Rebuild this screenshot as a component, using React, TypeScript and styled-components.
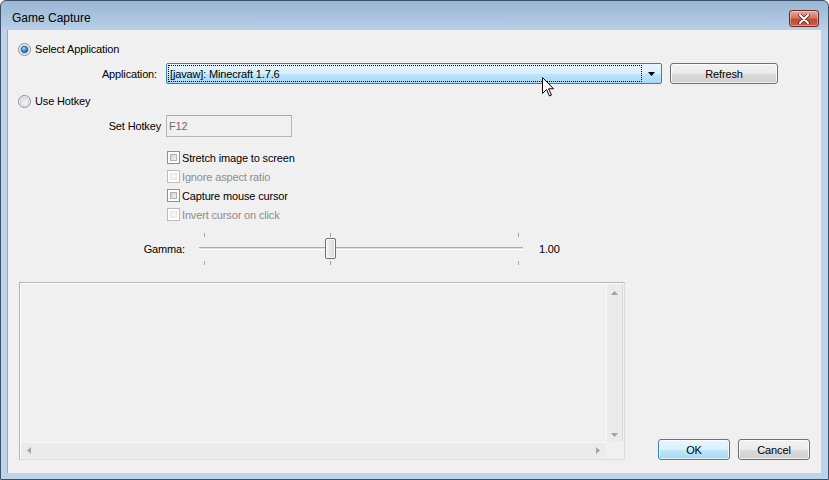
import styled, { createGlobalStyle } from 'styled-components';

const GlobalStyle = createGlobalStyle`
  html, body {
    margin: 0;
    padding: 0;
    background: #ffffff;
  }
  body {
    font-family: 'Liberation Sans', Arial, sans-serif;
    font-size: 11px;
    letter-spacing: -0.15px;
    color: #000000;
  }
`;

const Window = styled.div`
  position: relative;
  box-sizing: border-box;
  width: 829px;
  height: 480px;
  display: flex;
  flex-direction: column;
  border: 1px solid #3e5068;
  border-radius: 6px 6px 0 0;
  background: linear-gradient(#9bb6d3 0px, #b3cbe5 24px, #bcd3ea 30px, #bcd3ea 100%);
  overflow: hidden;
`;

const TitleBar = styled.div`
  height: 29px;
  flex: none;
  display: flex;
  align-items: flex-start;
  justify-content: space-between;
  box-sizing: border-box;
  padding: 9px 9px 0 11px;
`;

const Title = styled.span`
  font-size: 12px;
  line-height: 17px;
  letter-spacing: 0;
  color: #000000;
`;

const CloseButton = styled.div`
  box-sizing: border-box;
  width: 30px;
  height: 17px;
  display: flex;
  align-items: center;
  justify-content: center;
  border: 1px solid #6c2a22;
  border-radius: 3px;
  background: linear-gradient(#e6a89c 0%, #d37965 45%, #c04a35 55%, #c9604a 100%);
  box-shadow: inset 0 0 0 1px rgba(255, 255, 255, 0.35);
`;

const Client = styled.div`
  flex: 1;
  margin: 0 7px 6px 7px;
  background: #f0f0f0;
  display: flex;
  flex-direction: column;
  padding-top: 11px;
  box-shadow: -1px 0 0 #8fa8c6;
`;

const RadioRow = styled.label<{ $top: number }>`
  height: 16px;
  display: flex;
  align-items: center;
  gap: 4px;
  padding-left: 10px;
  margin-top: ${(p) => p.$top}px;
`;

const FieldRow = styled.div<{ $top: number }>`
  display: grid;
  grid-template-columns: 153px auto auto;
  justify-content: start;
  align-items: center;
  column-gap: 5px;
  margin-top: ${(p) => p.$top}px;
`;

const FieldLabel = styled.span<{ $pad?: number }>`
  text-align: right;
  padding-right: ${(p) => p.$pad ?? 0}px;
`;

const ComboBox = styled.div`
  box-sizing: border-box;
  width: 496px;
  height: 21px;
  display: flex;
  align-items: center;
  padding: 1px;
  border: 1px solid #3c7fb1;
  border-radius: 2px;
  background: linear-gradient(#eaf6fd 0%, #d9f0fc 50%, #bee6fd 51%, #a7d9f5 100%);
`;

const ComboText = styled.div`
  box-sizing: border-box;
  flex: 1;
  height: 17px;
  display: flex;
  align-items: center;
  padding-left: 1px;
  border: 1px dotted #000000;
`;

const ComboArrow = styled.div`
  width: 18px;
  display: flex;
  justify-content: center;
  align-items: center;
`;

const Button = styled.div<{ $default?: boolean; $width: number }>`
  box-sizing: border-box;
  width: ${(p) => p.$width}px;
  height: 21px;
  display: flex;
  align-items: center;
  justify-content: center;
  border: 1px solid ${(p) => (p.$default ? '#3c7fb1' : '#707070')};
  border-radius: 3px;
  background: ${(p) =>
    p.$default
      ? 'linear-gradient(#eaf6fd 0%, #d9f0fc 50%, #bee6fd 51%, #a7d9f5 100%)'
      : 'linear-gradient(#f2f2f2 0%, #ebebeb 50%, #dddddd 51%, #cfcfcf 100%)'};
  box-shadow: inset 0 0 0 1px rgba(255, 255, 255, 0.7);
`;

const RefreshButton = styled(Button)`
  margin-left: 3px;
`;

const HotkeyInput = styled.div`
  box-sizing: border-box;
  width: 126px;
  height: 22px;
  display: flex;
  align-items: center;
  padding-left: 2px;
  color: #6d6d6d;
  border: 1px solid #b6b6b6;
  border-top-color: #a8a8a8;
  background: #f0f0f0;
`;

const CheckList = styled.div`
  display: flex;
  flex-direction: column;
  padding-left: 159px;
  margin-top: 11px;
`;

const CheckRow = styled.div<{ $disabled?: boolean }>`
  height: 19px;
  display: flex;
  align-items: center;
  gap: 2px;
  color: ${(p) => (p.$disabled ? '#8d8d8d' : '#000000')};
`;

const Box = styled.span<{ $disabled?: boolean }>`
  box-sizing: border-box;
  width: 13px;
  height: 13px;
  border: 1px solid ${(p) => (p.$disabled ? '#bcbcbc' : '#8e8f8f')};
  background: #ffffff;
  padding: 2px;
  &::after {
    content: '';
    display: block;
    width: 100%;
    height: 100%;
    box-sizing: border-box;
    border: 1px solid ${(p) => (p.$disabled ? '#e6e6e6' : '#aeb3b9')};
    background: ${(p) =>
      p.$disabled ? '#f4f4f4' : 'linear-gradient(135deg, #cbcfd5 0%, #f6f6f6 100%)'};
  }
`;

const SliderRow = styled.div`
  display: grid;
  grid-template-columns: 177px 324px auto;
  column-gap: 14px;
  align-items: center;
  height: 35px;
  margin-top: 7px;
`;

const GammaLabel = styled.span`
  text-align: right;
`;

const Slider = styled.div`
  position: relative;
  height: 35px;
`;

const Track = styled.div`
  position: absolute;
  left: 0;
  right: 0;
  top: 16px;
  height: 1px;
  border-top: 1px solid #a9a9a9;
  border-bottom: 1px solid #ffffff;
  background: #dedede;
`;

const Tick = styled.span<{ $bottom?: boolean }>`
  position: absolute;
  width: 1px;
  height: 4px;
  background: #a5a5a5;
  top: ${(p) => (p.$bottom ? 30 : 2)}px;
`;

const Thumb = styled.div`
  position: absolute;
  top: 7px;
  box-sizing: border-box;
  width: 11px;
  height: 21px;
  border: 1px solid #707070;
  border-radius: 2px;
  background: linear-gradient(90deg, #f4f4f4 0%, #e4e4e4 60%, #d6d6d6 100%);
  box-shadow: inset 0 0 0 1px #fbfbfb;
`;

const ValueText = styled.span`
  padding-left: 2px;
`;

const BottomArea = styled.div`
  display: flex;
  align-items: flex-end;
  padding: 0 11px 0 11px;
  margin-top: 16px;
`;

const LogPanel = styled.div`
  box-sizing: border-box;
  width: 606px;
  height: 178px;
  display: grid;
  grid-template-columns: 1fr 17px;
  grid-template-rows: 1fr 16px;
  padding: 1px;
  border: 1px solid #b4b4b4;
  border-right-color: #dcdcdc;
  border-bottom-color: #dcdcdc;
  box-shadow: inset 1px 1px 0 #ffffff;
  background: #f0f0f0;
`;

const VScroll = styled.div`
  display: flex;
  flex-direction: column;
  justify-content: space-between;
  align-items: center;
  padding: 7px 0 5px;
  background: #ebebeb;
  border-left: 1px solid #f7f7f7;
  border-right: 1px solid #dadada;
`;

const HScroll = styled.div`
  display: flex;
  justify-content: space-between;
  align-items: center;
  padding: 0 6px 0 6px;
  background: #ebebeb;
  border-top: 1px solid #f7f7f7;
`;

const Corner = styled.div`
  background: #f0f0f0;
`;

const ButtonGroup = styled.div`
  margin-left: auto;
  display: flex;
  gap: 8px;
`;

const Cursor = styled.svg`
  position: absolute;
  left: 541px;
  top: 76px;
`;

const RadioIcon = ({ checked }: { checked?: boolean }) => (
  <svg width="13" height="13" viewBox="0 0 13 13">
    <defs>
      <linearGradient id="rbg" x1="0" y1="0" x2="1" y2="1">
        <stop offset="0" stopColor="#d8dadd" />
        <stop offset="1" stopColor="#ffffff" />
      </linearGradient>
      <radialGradient id="rdot" cx="0.4" cy="0.35" r="0.7">
        <stop offset="0" stopColor="#a7dbfb" />
        <stop offset="0.5" stopColor="#3a8fd3" />
        <stop offset="1" stopColor="#1a4f86" />
      </radialGradient>
    </defs>
    <circle cx="6.5" cy="6.5" r="6" fill="#f4f4f4" stroke="#8a8c8e" />
    <circle cx="6.5" cy="6.5" r="4.2" fill="url(#rbg)" stroke="#c2c5c9" strokeWidth="0.8" />
    {checked && <circle cx="6.5" cy="6.5" r="3.3" fill="url(#rdot)" stroke="#1b4f80" strokeWidth="0.6" />}
  </svg>
);

const Arrow = ({ dir }: { dir: 'up' | 'down' | 'left' | 'right' }) => {
  const pts = {
    up: '0,4 3.5,0 7,4',
    down: '0,0 7,0 3.5,4',
    left: '4,0 4,7 0,3.5',
    right: '0,0 4,3.5 0,7',
  }[dir];
  const vertical = dir === 'up' || dir === 'down';
  return (
    <svg width={vertical ? 7 : 4} height={vertical ? 4 : 7} viewBox={vertical ? '0 0 7 4' : '0 0 4 7'}>
      <polygon points={pts} fill="#a3a3a3" />
    </svg>
  );
};

const ticks = [5, 131, 319];

export default function App() {
  return (
    <>
      <GlobalStyle />
      <Window>
        <TitleBar>
          <Title>Game Capture</Title>
          <CloseButton>
            <svg width="12" height="10" viewBox="0 0 12 10">
              <path d="M2 1 L10 9 M10 1 L2 9" stroke="#4a1a14" strokeWidth="3.4" strokeLinecap="round" />
              <path d="M2 1 L10 9 M10 1 L2 9" stroke="#ffffff" strokeWidth="2" strokeLinecap="round" />
            </svg>
          </CloseButton>
        </TitleBar>
        <Client>
          <RadioRow $top={0}>
            <RadioIcon checked />
            <span>Select Application</span>
          </RadioRow>
          <FieldRow $top={6}>
            <FieldLabel $pad={4}>Application:</FieldLabel>
            <ComboBox>
              <ComboText>[javaw]: Minecraft 1.7.6</ComboText>
              <ComboArrow>
                <svg width="7" height="4" viewBox="0 0 7 4">
                  <polygon points="0,0 7,0 3.5,4" fill="#000000" />
                </svg>
              </ComboArrow>
            </ComboBox>
            <RefreshButton $width={108}>Refresh</RefreshButton>
          </FieldRow>
          <RadioRow $top={9}>
            <RadioIcon />
            <span>Use Hotkey</span>
          </RadioRow>
          <FieldRow $top={6}>
            <FieldLabel>Set Hotkey</FieldLabel>
            <HotkeyInput>F12</HotkeyInput>
          </FieldRow>
          <CheckList>
            <CheckRow>
              <Box />
              <span>Stretch image to screen</span>
            </CheckRow>
            <CheckRow $disabled>
              <Box $disabled />
              <span>Ignore aspect ratio</span>
            </CheckRow>
            <CheckRow>
              <Box />
              <span>Capture mouse cursor</span>
            </CheckRow>
            <CheckRow $disabled>
              <Box $disabled />
              <span>Invert cursor on click</span>
            </CheckRow>
          </CheckList>
          <SliderRow>
            <GammaLabel>Gamma:</GammaLabel>
            <Slider>
              <Track />
              {ticks.map((t) => (
                <Tick key={`t${t}`} style={{ left: t }} />
              ))}
              {ticks.map((t) => (
                <Tick key={`b${t}`} $bottom style={{ left: t }} />
              ))}
              <Thumb style={{ left: 126 }} />
            </Slider>
            <ValueText>1.00</ValueText>
          </SliderRow>
          <BottomArea>
            <LogPanel>
              <div />
              <VScroll>
                <Arrow dir="up" />
                <Arrow dir="down" />
              </VScroll>
              <HScroll>
                <Arrow dir="left" />
                <Arrow dir="right" />
              </HScroll>
              <Corner />
            </LogPanel>
            <ButtonGroup>
              <Button $default $width={72}>OK</Button>
              <Button $width={72}>Cancel</Button>
            </ButtonGroup>
          </BottomArea>
        </Client>
        <Cursor width="13" height="20" viewBox="0 0 13 20">
          <path d="M0.5 0.5 L0.5 16.5 L4.5 12.5 L7.5 19 L9.5 18 L6.5 11.8 L11.5 11.8 Z" fill="#ffffff" stroke="#000000" strokeWidth="1" strokeLinejoin="miter" />
        </Cursor>
      </Window>
    </>
  );
}
